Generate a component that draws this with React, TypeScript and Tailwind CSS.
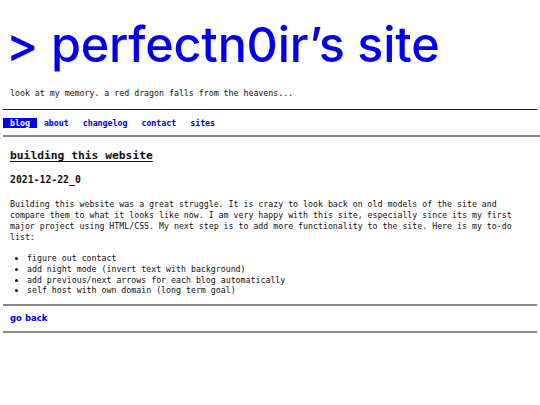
export default function App() {
  const todo = [
    "figure out contact",
    "add night mode (invert text with background)",
    "add previous/next arrows for each blog automatically",
    "self host with own domain (long term goal)",
  ];
  const nav = ["blog", "about", "changelog", "contact", "sites"];

  return (
    <div className="min-h-[405px] w-[540px] bg-white text-[#111] font-['DejaVu_Sans_Mono',monospace] text-[8.25px] leading-[10.7px]">
      <h1 className="pl-[6px] pt-[19px] font-['Inter',sans-serif] text-[48.5px] leading-[52px] font-medium text-[#0000f0] tracking-[-0.2px]">
        &gt; perfectn0ir&rsquo;s site
      </h1>
      <p className="mt-[17px] pl-[10px]">look at my memory. a red dragon falls from the heavens...</p>

      <div className="mx-[3px] mt-[10px] border-t border-[#222]" />
      <nav className="flex pl-[3px] pt-[8px] pb-[7px] font-bold">
        {nav.map((n, i) => (
          <a
            key={n}
            className={
              i === 0
                ? "px-[7px] bg-[#0000f0] text-white"
                : "px-[7px] text-[#0000ee]"
            }
          >
            {n}
          </a>
        ))}
      </nav>
      <div className="ml-[3px] border-t-2 border-[#888]" />

      <article className="px-[10px]">
        <h2 className="mt-[12px] text-[11.3px] leading-[14px] font-bold underline underline-offset-[2px]">
          building_this_website
        </h2>
        <h3 className="mt-[11px] text-[9.8px] leading-[12px] font-bold">2021-12-22_0</h3>
        <p className="mt-[13px]">
          Building this website was a great struggle. It is crazy to look back on old models of the site and
          compare them to what it looks like now. I am very happy with this site, especially since its my first
          major project using HTML/CSS. My next step is to add more functionality to the site. Here is my to-do
          list:
        </p>
        <ul className="mt-[11px] pl-[17px] list-disc">
          {todo.map((t) => (
            <li key={t}>{t}</li>
          ))}
        </ul>
      </article>

      <div className="mx-[3px] mt-[8px] border-t-2 border-[#888]" />
      <div className="pl-[10px] pt-[7px] pb-[7px]">
        <a className="font-['DejaVu_Sans',sans-serif] text-[8.5px] font-bold text-[#0000ee]">go back</a>
      </div>
      <div className="mx-[3px] border-t-2 border-[#888]" />
    </div>
  );
}
